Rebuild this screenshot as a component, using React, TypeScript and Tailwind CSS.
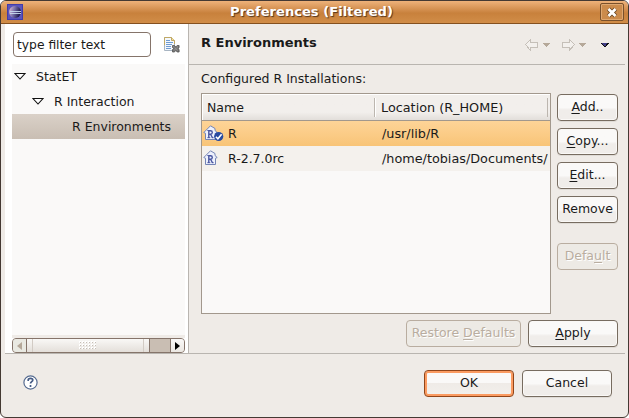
import React from 'react';

type ButtonProps = {
  label: string;
  mnemonic?: number;
  className?: string;
  disabled?: boolean;
  primary?: boolean;
};

function Label({ text, mnemonic = -1 }: { text: string; mnemonic?: number }) {
  if (mnemonic < 0) return <>{text}</>;
  return (
    <>
      {text.slice(0, mnemonic)}
      <span className="underline decoration-1 underline-offset-2">{text[mnemonic]}</span>
      {text.slice(mnemonic + 1)}
    </>
  );
}

function Button({ label, mnemonic, className = '', disabled, primary }: ButtonProps) {
  const look = disabled
    ? 'border-[#b9ada0] bg-[#edeae5] text-[#b9ada0] [text-shadow:1px_1px_0_#fff]'
    : primary
      ? 'border-[#914519] bg-linear-to-b from-[#faf9f8] from-50% via-[#efebe7] via-50% to-[#f3f0ec] shadow-[inset_0_0_0_2px_#fb9b61,inset_0_-2px_0_#f1771f]'
      : 'border-[#776c60] bg-linear-to-b from-[#faf9f8] to-[#f0edea] from-[50%] to-[60%] shadow-[inset_0_0_0_1px_#faf8f6,0_1px_0_#dfdbd6]';
  return (
    <button className={`flex h-[27px] shrink-0 items-center justify-center rounded-[4px] border pb-[2px] whitespace-pre ${look} ${className}`}>
      <span><Label text={label} mnemonic={mnemonic} /></span>
    </button>
  );
}

function EclipseIcon() {
  return (
    <svg width="16" height="16" viewBox="0 0 16 16">
      <defs>
        <linearGradient id="globe" x1="0" x2="1" y1="0" y2=".3">
          <stop offset="0" stopColor="#ecc8da" />
          <stop offset=".5" stopColor="#776ea8" />
          <stop offset="1" stopColor="#1d174c" />
        </linearGradient>
      </defs>
      <rect x=".5" y=".5" width="15" height="15" fill="#5a54bb" stroke="#423cab" />
      <circle cx="8" cy="8" r="6" fill="url(#globe)" />
      <path d="M3 7.500h11M3 9.500h11" stroke="#c9dcf0" strokeWidth=".9" />
    </svg>
  );
}

function ClearFilterIcon() {
  return (
    <svg width="17" height="17" viewBox="0 0 17 17">
      <path d="M1.500 1.500h7l3 3v10h-10z" fill="#f4f8fd" stroke="#a8b5c2" />
      <path d="M1.500 9V1.500h7l3 3V8" fill="none" stroke="#c0a865" />
      <path d="M8.500 1.500v3h3" fill="#f2df9e" stroke="#c0a865" />
      <path d="M3 4.500h4M3 6.500h7M3 8.500h6M3 10.500h5M3 12.500h5" stroke="#6f9bd1" />
      <path d="M9.500 9.500h2l1.300 1.500 1.300-1.500h2v2.200L15 12.500l1.100 1v2.500h-2L12.800 14.300 11.500 16h-2v-2.500l1.100-1-1.100-1z" fill="#777" stroke="#555" strokeWidth=".8" />
      <path d="M10.500 10.500l4.500 4.500m0-4.500L10.500 15" stroke="#aaa" strokeWidth=".8" strokeDasharray="1 1" />
    </svg>
  );
}

function Expander() {
  return (
    <svg width="12" height="7" viewBox="0 0 12 7" className="shrink-0">
      <path d="M1 .5h10L6 6z" fill="#fff" stroke="#111" strokeWidth="1.100" />
    </svg>
  );
}

function HomeIcon({ checked = false }: { checked?: boolean }) {
  return (
    <svg width="21" height="17" viewBox="0 0 21 17" className="shrink-0">
      <path d="M7.500 .8L.8 7.500l1.700.8v6.200h10V8.300l1.700-.8-2.200-2V3.500z" fill="#eef1fc" stroke="#7484b5" strokeLinejoin="round" />
      <path d="M5.800 5.500v7.500M5.800 5.700h1.700c2.400 0 2.400 3.500 0 3.500H5.800M7.700 9.500l1.900 3.500" fill="none" stroke="#4855a0" strokeWidth="1.400" />
      <path d="M4.300 5.500h2M4.300 12.700h3M8.800 12.700h1.900" stroke="#4855a0" strokeWidth=".9" />
      {checked && (
        <>
          <circle cx="15.700" cy="11.500" r="4.600" fill="#294aa0" />
          <path d="M12.900 11.700l2 2 3.700-4.400" fill="none" stroke="#fff" strokeWidth="1.600" />
        </>
      )}
    </svg>
  );
}

function Toolbar() {
  return (
    <svg width="86" height="13" viewBox="0 0 86 13" shapeRendering="crispEdges">
      <path d="M.5 6.500l5-5v3h7v5h-7v3z" fill="#f3f0ed" stroke="#c5bfb8" />
      <path d="M17 4.500h9L21.500 9z" fill="#b5a899" />
      <path d="M49.500 6.500l-5-5v3h-7v5h7v3z" fill="#f3f0ed" stroke="#c5bfb8" />
      <path d="M53 4.500h9L57.500 9z" fill="#b5a899" />
      <path d="M75 4.500h10L80 10z" fill="#111" />
      <path d="M76 5h6l-2 4z" fill="#413d85" />
    </svg>
  );
}

function HorizontalScrollbar() {
  return (
    <div className="flex h-[15px] w-[173px] overflow-hidden rounded-[4px] border border-[#85746a] bg-[#c9beb3]">
      <div className="flex w-[14px] items-center justify-center border-r border-[#85746a] bg-[#e9e9e2]">
        <svg width="5" height="8"><path d="M5 0v8L0 4z" fill="#b5a899" /></svg>
      </div>
      <div className="flex w-[123px] items-center justify-between border-r border-[#85746a] bg-linear-to-b from-[#f9f8f6] to-[#e4dfda] px-[5px]">
        <span className="h-full w-px bg-[#d2cbc4]" />
        <svg width="18" height="9" shapeRendering="crispEdges">
          {[0, 3, 6].map((y) =>
            [0, 3, 6, 9, 12, 15].map((x) => (
              <g key={`${x}-${y}`}>
                <rect x={x} y={y} width="2" height="2" fill="#fff" />
                <rect x={x + 1} y={y + 1} width="1" height="1" fill="#c6beb6" />
              </g>
            )),
          )}
        </svg>
        <span className="h-full w-px bg-[#d2cbc4]" />
      </div>
      <div className="w-[20px]" />
      <div className="flex flex-1 items-center justify-center border-l border-[#85746a] bg-linear-to-b from-[#faf9f8] to-[#ebe7e2]">
        <svg width="5" height="8"><path d="M0 0v8l5-4z" fill="#000" /></svg>
      </div>
    </div>
  );
}

export default function App() {
  return (
    <div className="h-[418px] w-[629px] bg-white font-['DejaVu_Sans',sans-serif] text-[12.5px] leading-[15px] text-[#1a1a1a]">
      <div className="flex h-full flex-col overflow-hidden rounded-[6px] border border-[#443933] bg-[#efebe7]">
        <header className="flex h-[23px] shrink-0 items-center border-b border-[#84501f] bg-linear-to-b from-[#eeb27a] via-[#c8813c] via-55% to-[#d18d48] pr-1 pl-[6px]">
          <EclipseIcon />
          <h1 className="flex-1 pb-px text-center text-[13.1px] font-bold text-white [text-shadow:1px_1px_1px_#55351c]">
            Preferences (Filtered)
          </h1>
          <button className="flex h-[18px] w-[24px] items-center justify-center rounded-[2px] border border-[#79502b] bg-[#cb8b4c] shadow-[inset_0_0_0_1px_#dfa871]">
            <svg width="12" height="11" viewBox="0 0 12 11">
              <path d="M2.500 2l7 7m0-7l-7 7" stroke="#684421" strokeWidth="4.500" />
              <path d="M2.500 2l7 7m0-7l-7 7" stroke="#fff" strokeWidth="2.800" />
            </svg>
          </button>
        </header>

        <main className="mr-[3px] ml-1 flex h-[330px] shrink-0 border-b border-[#b9b5b0]">
          <aside className="w-[184px] shrink-0 border-r border-[#b9b5b0] bg-white pl-[7px]">
            <div className="flex h-[40px] items-start pt-[8px] pl-px">
              <input
                className="h-[25px] w-[138px] rounded-[4px] border border-[#85746a] bg-white px-[3px] text-[12.3px] text-[#1a1a1a]"
                defaultValue="type filter text"
              />
              <div className="mt-[4px] ml-[12px]"><ClearFilterIcon /></div>
            </div>
            <div className="h-[271px] w-[173px] bg-[#faf9f8]">
              <div className="flex h-[25px] items-center gap-[10px] pb-px pl-[2px]"><Expander />StatET</div>
              <div className="flex h-[25px] items-center gap-[10px] pb-px pl-[20px]"><Expander />R Interaction</div>
              <div className="flex h-[25px] items-center bg-linear-to-b from-[#dad1c8] to-[#c9beb3] pb-px pl-[60px] whitespace-nowrap">R Environments</div>
            </div>
            <div className="h-[3px] w-[173px] bg-[#efebe7]" />
            <HorizontalScrollbar />
          </aside>

          <section className="flex flex-1 flex-col">
            <div className="flex h-[41px] shrink-0 items-center justify-between border-b border-[#b9b5b0] pr-[14px] pb-[3px] pl-[12px]">
              <h2 className="text-[13px] font-bold">R Environments</h2>
              <div className="pt-[4px]"><Toolbar /></div>
            </div>
            <div className="flex h-[28px] shrink-0 items-center pb-[2px] pl-[12px]">Configured R Installations:</div>
            <div className="flex gap-[6px] pl-[12px]">
              <div className="h-[221px] w-[350px] overflow-hidden border border-[#a2988d] bg-[#faf9f8]">
                <div className="flex h-[27px] items-center border-b border-[#a2988d] bg-linear-to-b from-[#f2efec] from-70% to-[#e2deda] shadow-[inset_1px_1px_0_#fff]">
                  <div className="flex h-[19px] w-[173px] items-center border-r border-[#bcb6af] pl-[5px]">Name</div>
                  <div className="flex h-[19px] w-[173px] items-center border-r border-l border-[#bcb6af] border-l-white pl-[5px] text-[12.8px]">Location (R_HOME)</div>
                </div>
                <div className="flex h-[25px] items-center bg-linear-to-b from-[#fed497] to-[#f8c477] pb-px">
                  <div className="flex w-[180px] items-center gap-[4px] pl-px"><HomeIcon checked />R</div>
                  <span className="text-[12.8px]">/usr/lib/R</span>
                </div>
                <div className="flex h-[25px] items-center bg-[#f4f1ed] pb-px">
                  <div className="flex w-[180px] shrink-0 items-center gap-[4px] pl-px"><HomeIcon />R-2.7.0rc</div>
                  <span className="text-[12.8px] whitespace-nowrap">/home/tobias/Documents/</span>
                </div>
              </div>
              <div className="flex w-[61px] flex-col gap-[7px] pt-px">
                <Button label="Add.." mnemonic={0} />
                <Button label="Copy..." mnemonic={0} />
                <Button label="Edit..." mnemonic={0} />
                <Button label="Remove" />
                <Button label="Default" mnemonic={4} disabled className="mt-[13px]" />
              </div>
            </div>
            <div className="mt-[6px] flex justify-end gap-[7px] pr-[7px]">
              <Button label="Restore Defaults" mnemonic={8} disabled className="w-[115px]" />
              <Button label="Apply" mnemonic={0} className="w-[90px]" />
            </div>
          </section>
        </main>

        <footer className="flex flex-1 items-start justify-between pt-[16px] pr-[16px] pl-[22px]">
          <svg width="15" height="15" viewBox="0 0 15 15" className="mt-[5px]">
            <circle cx="7.500" cy="7.500" r="6.600" fill="#fff" stroke="#576c91" strokeWidth="1.200" />
            <path d="M5.200 6V5c0-2.300 4.600-2.300 4.600 0 0 1.600-2.300 1.700-2.300 3.500M7.500 10v2" fill="none" stroke="#465c86" strokeWidth="1.700" />
          </svg>
          <div className="flex gap-[8px]">
            <Button label="OK" primary className="w-[90px]" />
            <Button label="Cancel" className="w-[90px]" />
          </div>
        </footer>
      </div>
    </div>
  );
}
